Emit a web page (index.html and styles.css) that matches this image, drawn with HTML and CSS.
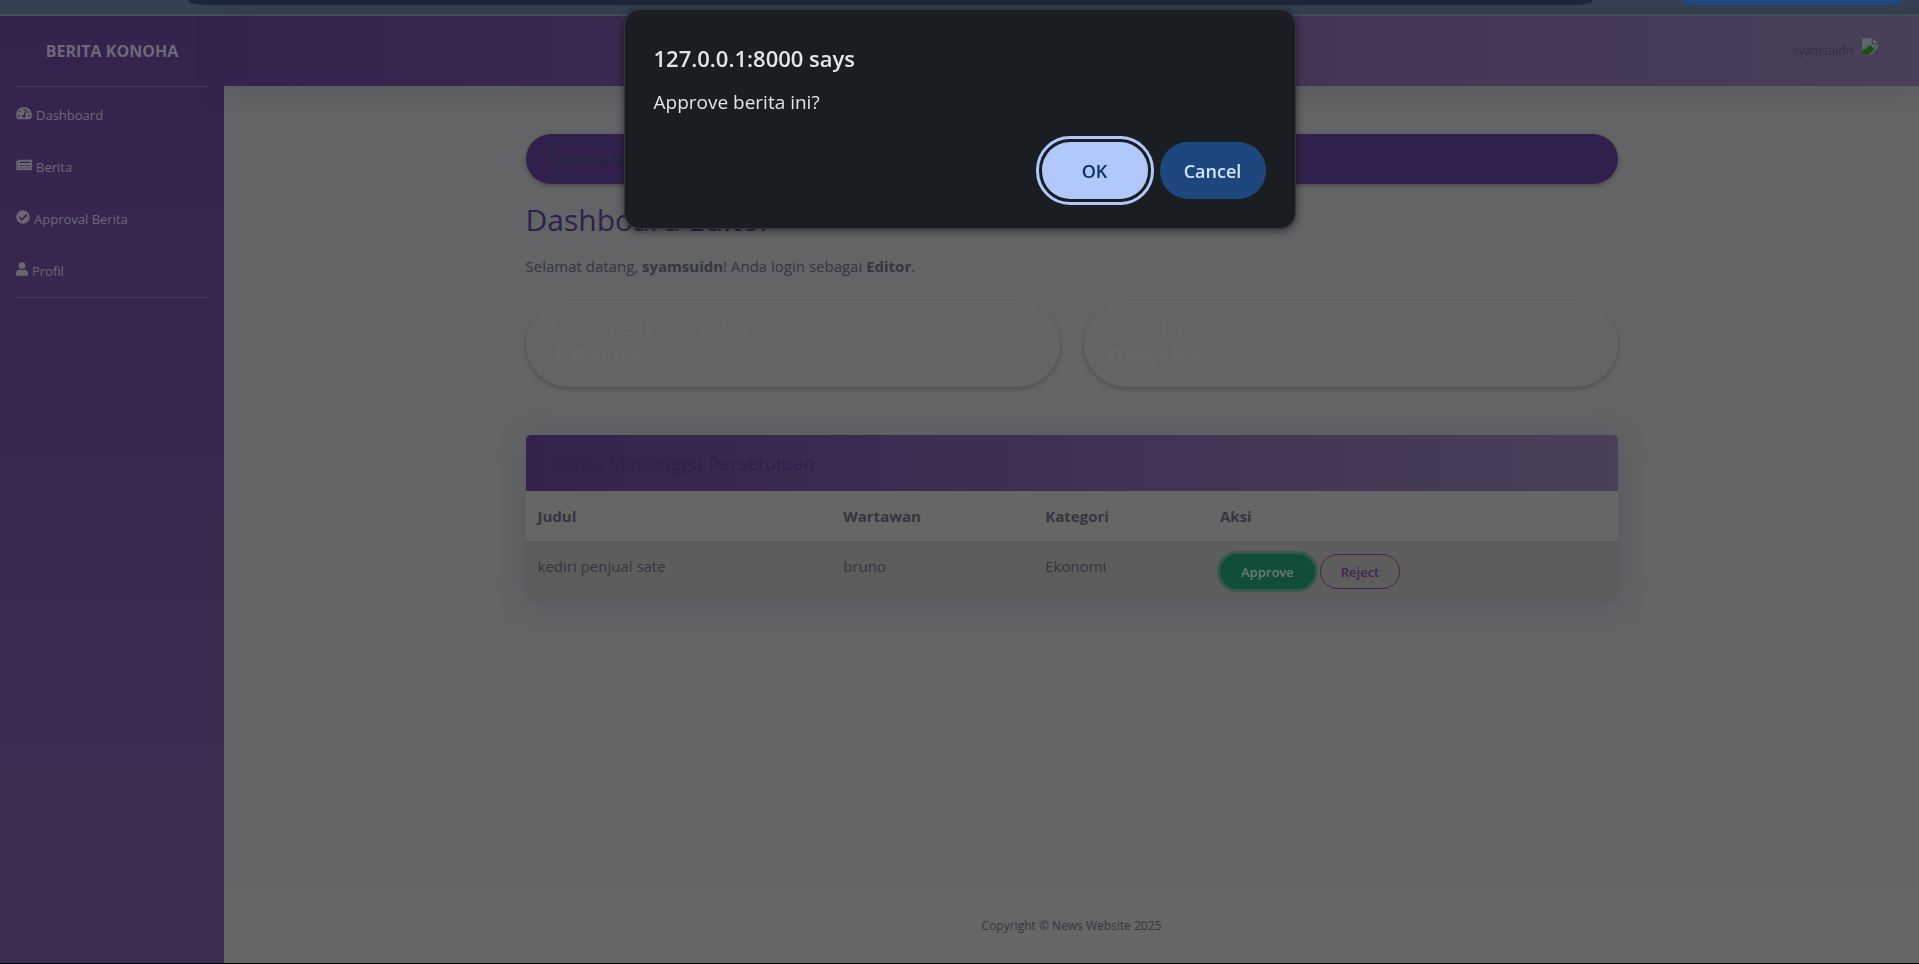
FILE: index.html
```html
<!DOCTYPE html>
<html lang="id">
<head>
<meta charset="utf-8">
<meta name="viewport" content="width=device-width, initial-scale=1">
<title>Dashboard Editor</title>
<link rel="stylesheet" href="styles.css">
</head>
<body>
<div class="browser-strip"><span class="address-bar"></span><span class="browser-action"></span></div>
<div class="wrapper">
  <nav class="sidebar">
    <a class="brand" href="#">BERITA KONOHA</a>
    <hr class="divider">
    <ul class="menu">
      <li><a href="#"><svg class="icon wide" viewBox="0 0 576 512"><path fill-rule="evenodd" d="M288 32C129 32 0 161 0 320c0 53 14 102 39 145 6 9 16 15 27 15h444c11 0 21-6 27-15 25-43 39-92 39-145C576 161 447 32 288 32zM288 96a32 32 0 1 1 0 64 32 32 0 0 1 0-64zM96 384a32 32 0 1 1 0-64 32 32 0 0 1 0 64zM144 224a32 32 0 1 1 0-64 32 32 0 0 1 0 64zM343 416H233c-6-9-9-20-9-32 0-33 26-60 59-63l62-187c4-13 18-20 30-15 13 4 20 17 16 30l-62 186c14 12 23 29 23 49 0 12-4 23-9 32zM415 214c6-15 20-22 33-22a32 32 0 1 1-27 49zM480 384a32 32 0 1 1 0-64 32 32 0 0 1 0 64z"/></svg> <span>Dashboard</span></a></li>
      <li><a href="#"><svg class="icon wide" viewBox="0 0 576 512"><path fill-rule="evenodd" d="M552 64H88c-13 0-24 11-24 24v8H24c-13 0-24 11-24 24v272c0 31 25 56 56 56h496c13 0 24-11 24-24V88c0-13-11-24-24-24zM48 392V144h16v248a8 8 0 0 1-16 0zM308 376H140c-7 0-12-5-12-12s5-12 12-12h168c7 0 12 5 12 12s-5 12-12 12zM500 376H364c-7 0-12-5-12-12s5-12 12-12h136c7 0 12 5 12 12s-5 12-12 12zM308 284H140c-7 0-12-5-12-12s5-12 12-12h168c7 0 12 5 12 12s-5 12-12 12zM500 284H364c-7 0-12-5-12-12s5-12 12-12h136c7 0 12 5 12 12s-5 12-12 12zM500 184H140c-7 0-12-5-12-12v-24c0-7 5-12 12-12h360c7 0 12 5 12 12v24c0 7-5 12-12 12z"/></svg> <span>Berita</span></a></li>
      <li><a href="#"><svg class="icon" viewBox="0 0 512 512"><path fill-rule="evenodd" d="M504 256a248 248 0 1 1-496 0 248 248 0 0 1 496 0zM227 387l184-184c6-6 6-16 0-22l-22-23c-7-6-17-6-23 0L216 308l-70-70c-6-6-16-6-23 0l-22 23c-6 6-6 16 0 22l104 104c6 6 16 6 22 0z"/></svg> <span>Approval Berita</span></a></li>
      <li><a href="#"><svg class="icon narrow" viewBox="0 0 448 512"><path d="M224 256a128 128 0 1 0 0-256 128 128 0 0 0 0 256zm90 32h-17c-45 20-101 20-146 0h-17C60 288 0 348 0 422v42c0 27 21 48 48 48h352c27 0 48-21 48-48v-42c0-74-60-134-134-134z"/></svg> <span>Profil</span></a></li>
    </ul>
    <hr class="divider">
  </nav>
  <div class="content">
    <header class="topbar">
      <a class="user" href="#"><span>syamsuidn</span>
        <span class="avatar"><svg viewBox="0 0 16 16"><path d="M1 1h9l5 5v9H1z" fill="#5b6a72"/><path d="M1 8l4-3 4 3 6-1v8H1z" fill="#52665f"/><path d="M1 15v-3l4-2 3-3 4 4-5 4z" fill="#1f4b14"/><path d="M10 1v5h5" fill="#6b6b70" stroke="#39343f"/><path d="M15 10l-5 5h5z" fill="#463d55"/></svg></span>
      </a>
    </header>
    <main class="container">
      <div class="alert" role="status">Selamat datang di dashboard!</div>
      <h1>Dashboard Editor</h1>
      <p class="welcome">Selamat datang, <strong>syamsuidn</strong>! Anda login sebagai <strong>Editor</strong>.</p>
      <div class="stats">
        <section class="stat"><div class="stat-label">Menunggu Persetujuan</div><div class="stat-value">1 Berita</div></section>
        <section class="stat"><div class="stat-label">Disetujui</div><div class="stat-value">0 Berita</div></section>
      </div>
      <section class="card">
        <h2>Berita Menunggu Persetujuan</h2>
        <table>
          <colgroup><col class="col-title"><col class="col-writer"><col class="col-category"><col></colgroup>
          <thead><tr><th>Judul</th><th>Wartawan</th><th>Kategori</th><th>Aksi</th></tr></thead>
          <tbody><tr><td>kediri penjual sate</td><td>bruno</td><td>Ekonomi</td>
            <td><div class="actions"><button class="btn approve" type="button">Approve</button><button class="btn reject" type="button">Reject</button></div></td></tr></tbody>
        </table>
      </section>
    </main>
    <footer class="footer">Copyright © News Website 2025</footer>
  </div>
</div>
<dialog class="prompt" open aria-labelledby="prompt-title">
  <h2 id="prompt-title">127.0.0.1:8000 says</h2>
  <p>Approve berita ini?</p>
  <div class="prompt-actions"><button class="ok" type="button">OK</button><button class="cancel" type="button">Cancel</button></div>
</dialog>
</body>
</html>
```
FILE: styles.css
```css
* { box-sizing: border-box; }
body {
  margin: 0;
  min-height: 100vh;
  display: flex;
  flex-direction: column;
  background: #626466;
  border-bottom: 1px solid #000;
  color: #35363e;
  font: 15px/24px "Open Sans", "Noto Sans", sans-serif;
}
a { color: inherit; text-decoration: none; }
h1, h2, p, ul { margin: 0; padding: 0; font-weight: 400; }
button { font-family: inherit; }

.browser-strip {
  height: 16px;
  padding: 0 16px 0 188px;
  display: flex;
  align-items: flex-start;
  gap: 88px;
  background: #344150;
  border-bottom: 2px solid #42505a;
}
.address-bar { flex: 1; height: 5px; background: #1c2838; border-radius: 0 0 16px 16px / 0 0 5px 5px; }
.browser-action { width: 222px; height: 5px; background: #1e4a84; border-radius: 0 0 12px 12px / 0 0 5px 5px; }

.wrapper { flex: 1; display: flex; }
.sidebar { width: 224px; flex: none; background: linear-gradient(#34234d, #3e2f52); color: #6f6878; }
.brand {
  height: 70px;
  display: flex;
  align-items: center;
  justify-content: center;
  font-size: 16px;
  font-weight: 700;
}
.divider { margin: 0 16px; border: 0; border-top: 1px solid #483d53; }
.menu { list-style: none; display: grid; grid-auto-rows: 52px; padding-bottom: 2px; font-size: 13px; }
.menu a { height: 52px; padding: 0 16px; display: flex; align-items: center; gap: 4px; }
.menu span { padding-top: 3px; }
.icon { width: 14px; height: 14px; fill: #6c6670; }
.icon.wide { width: 16px; }
.icon.narrow { width: 12px; }

.content { flex: 1; min-width: 0; display: flex; flex-direction: column; }
.topbar {
  height: 70px;
  padding: 0 26px;
  display: flex;
  align-items: center;
  justify-content: flex-end;
  background: linear-gradient(90deg, #34234d, #4a4059);
  box-shadow: 0 2px 28px rgba(50, 50, 56, .25);
}
.user { display: flex; align-items: center; gap: 8px; font-size: 12px; color: #34303f; }
.avatar { width: 32px; height: 32px; padding: 2px 0; }
.avatar svg { display: block; width: 18px; height: 18px; }

.container { width: 100%; max-width: 1140px; margin: 0 auto; padding: 48px 24px; flex: 1; }
.alert {
  padding: 13px 25px;
  border-radius: 25px;
  background: #31204b;
  color: #1a2e40;
  box-shadow: 0 2px 4px rgba(40, 40, 44, .4);
}
h1 { margin-top: 16px; font-size: 30px; line-height: 40px; color: #31204b; }
.welcome { margin-top: 14px; }
.stats { margin-top: 23px; display: grid; grid-template-columns: 1fr 1fr; gap: 24px; }
.stat {
  padding: 15px 25px;
  border-radius: 43px;
  color: #686666;
  box-shadow: 0 2px 4px rgba(40, 40, 44, .35);
}
.stat-label { font-size: 15px; font-weight: 700; text-transform: uppercase; }
.stat-value { font-size: 24px; line-height: 32px; font-weight: 700; }
.card { margin-top: 48px; border-radius: 5px; overflow: hidden; background: #666; box-shadow: 0 2px 28px rgba(58, 59, 69, .25); }
.card h2 { padding: 16px 25px; font-size: 19px; color: #31204b; background: linear-gradient(90deg, #34234d, #4a4059); }
table { width: 100%; border-collapse: collapse; table-layout: fixed; }
.col-title { width: 28%; }
.col-writer { width: 18.5%; }
.col-category { width: 16%; }
th, td { padding: 13px 12px; text-align: left; vertical-align: top; }
tbody tr { background: #5d5d5d; }
.actions { display: flex; gap: 5px; }
.btn { height: 35px; padding: 0 20px; border-radius: 18px; font-size: 13px; font-weight: 600; }
.approve { border: 1px solid #124d3a; background: #124d3a; color: #6b7b74; box-shadow: 0 0 0 3px #34584a; }
.reject { border: 1px solid #432452; background: transparent; color: #432452; }
.footer { padding: 32px 24px; height: 77px; line-height: 16px; text-align: center; font-size: 12px; background: #666; }

.prompt {
  position: fixed;
  top: 9px;
  left: 0;
  right: 0;
  margin: 0 auto;
  width: 672px;
  padding: 34px 29px 29px;
  border: 1px solid #34383c;
  border-radius: 16px;
  background: #1a1d21;
  color: #e3e5e8;
  box-shadow: 0 2px 8px rgba(0, 0, 0, .5);
}
.prompt h2 { font-size: 22px; line-height: 28px; font-weight: 600; }
.prompt p { margin-top: 16px; font-size: 19px; line-height: 28px; }
.prompt-actions { margin-top: 26px; display: flex; justify-content: flex-end; gap: 12px; }
.prompt button { width: 106px; height: 57px; border: 0; border-radius: 28px; font-size: 18px; font-weight: 600; }
.ok { background: #b0c9fa; color: #0b3060; outline: 3px solid #b0c9fa; outline-offset: 3px; }
.cancel { background: #1e477d; color: #d3e5fc; }
```
